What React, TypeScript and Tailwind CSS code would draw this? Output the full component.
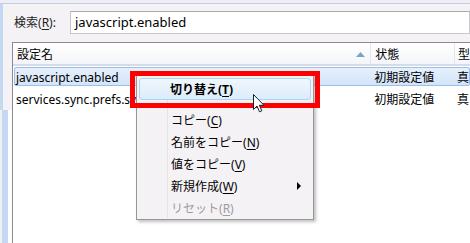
import { Fragment } from 'react';

const FONT = 'font-["Noto_Sans","Noto_Sans_CJK_JP",sans-serif]';

const rows = [
  { name: 'javascript.enabled', status: '初期設定値', type: '真', selected: true },
  { name: 'services.sync.prefs.sync.javascript.enabled', status: '初期設定値', type: '真', selected: false },
];

const menuItems = [
  { label: 'コピー', key: 'C' },
  { label: '名前をコピー', key: 'N' },
  { label: '値をコピー', key: 'V' },
  { label: '新規作成', key: 'W', sub: true },
  { label: 'リセット', key: 'R', disabled: true },
];

function Accel({ k }: { k: string }) {
  return (
    <Fragment>
      (<span className="underline underline-offset-2">{k}</span>)
    </Fragment>
  );
}

function Cursor() {
  return (
    <svg width="12" height="19" viewBox="0 0 12 19" className="absolute left-[253px] top-[94px]">
      <path
        d="M0.5 0.5 L0.5 15.5 L4 12 L6.5 17.8 L8.8 16.8 L6.4 11.3 L11 11.3 Z"
        fill="#ffffff"
        stroke="#0a2a30"
        strokeWidth="1"
        strokeLinejoin="round"
      />
    </svg>
  );
}

function ContextMenu() {
  return (
    <div className="absolute left-[136px] top-[75px] w-[178px] h-[145px] border border-[#979797] bg-[#f5f2f6] p-[2px] pb-0 shadow-[2px_2px_3px_rgba(0,0,0,0.25)]">
      <div className="relative flex flex-col">
        {/* gutter line */}
        <div className="absolute left-[28px] top-0 bottom-0 w-px bg-[#e2e3e3]" />
        <div className="relative h-[22px] rounded-[3px] border border-[#aed4f1] bg-gradient-to-b from-[#f0f7fd] to-[#dcecfb] flex items-center pl-[30px] pt-[1px] font-bold text-[12px] text-black">
          切り替え<Accel k="T" />
        </div>
        <div className="h-[8px]" />
        {menuItems.map(item => (
          <div
            key={item.key}
            className={`relative h-[22px] flex items-center pl-[32px] pt-[3px] text-[12px] ${item.disabled ? 'text-[#9d9d9d]' : 'text-black'}`}
          >
            {item.label}
            <Accel k={item.key} />
            {item.sub && (
              <svg width="5" height="8" viewBox="0 0 5 8" className="absolute right-[9px] top-[8px]">
                <path d="M0 0 L4 4 L0 8 Z" fill="#000" />
              </svg>
            )}
          </div>
        ))}
      </div>
    </div>
  );
}

export default function App() {
  return (
    <div className={`relative w-[470px] h-[243px] overflow-hidden bg-[#f5f2f6] ${FONT} text-[12px] text-black flex flex-col`}>
      <div className="h-[3px] bg-[#f1edf2]" />
      <div className="h-px bg-[#b9d1ec]" />

      <div className="flex flex-1 min-h-0">
        {/* left frame */}
        <div className="w-[12px] flex flex-col">
          <div className="h-[106px] border-l-[3px] border-[#c3d8f1]" />
          <div className="flex-1 flex">
            <div className="w-[2px] bg-[#f1f1f3]" />
            <div className="w-[6px] bg-[#c3d8f2]" />
            <div className="flex-1 bg-white" />
          </div>
        </div>

        <div className="flex-1 flex flex-col min-w-0">
          {/* search row */}
          <div className="flex items-center pt-[7px] pb-[8px]">
            <div className="w-[58px] pl-[2px] pt-[1px] text-[#1e1e1e]">
              検索<Accel k="R" />:
            </div>
            <div className="flex-1 h-[23px] border border-[#c9c6cc] border-t-[#aba8ae] bg-white flex items-center pl-[4px] pt-[1px] text-[13px]">
              javascript.enabled
            </div>
          </div>

          {/* list */}
          <div className="flex-1 border-l border-t border-[#8e8a94] bg-white flex flex-col">
            <div className="h-[23px] flex bg-gradient-to-b from-white to-[#f4f5f8] border-b-[2px] border-[#d5dce8]">
              <div className="w-[359px] flex items-center pl-[4px] pr-[2px] pt-[3px] border-r border-[#e3e6ec]">
                <span className="flex-1">設定名</span>
                <svg width="9" height="5" viewBox="0 0 9 5" className="mr-[3px] mb-[1px]">
                  <path d="M0 5 L4.5 0 L9 5 Z" fill="#7aa3c6" />
                </svg>
              </div>
              <div className="w-[84px] flex items-center pl-[4px] pt-[3px] border-r border-[#e3e6ec]">状態</div>
              <div className="flex-1 flex items-center pl-[3px] pt-[3px]">型</div>
            </div>

            {rows.map(r => (
              <div key={r.name} className="h-[22px] pt-[1px] pb-[2px]">
                <div
                  className={`h-full flex items-center whitespace-nowrap pt-[2px] ${
                    r.selected
                      ? 'ml-px rounded-[2px] border border-[#9ebfe6] bg-gradient-to-b from-[#e6f0fc] to-[#d3e4fa]'
                      : 'ml-px border border-transparent'
                  }`}
                >
                  <div className="w-[358px] pl-[1px] overflow-hidden">{r.name}</div>
                  <div className="w-[84px] pl-[3px]">{r.status}</div>
                  <div className="flex-1 pl-[2px]">{r.type}</div>
                </div>
              </div>
            ))}
          </div>
        </div>
      </div>

      <ContextMenu />

      {/* red callout */}
      <div className="absolute left-[130px] top-[71px] w-[190px] h-[37px] border-[5px] border-[#ff0000]" />

      <Cursor />
    </div>
  );
}
